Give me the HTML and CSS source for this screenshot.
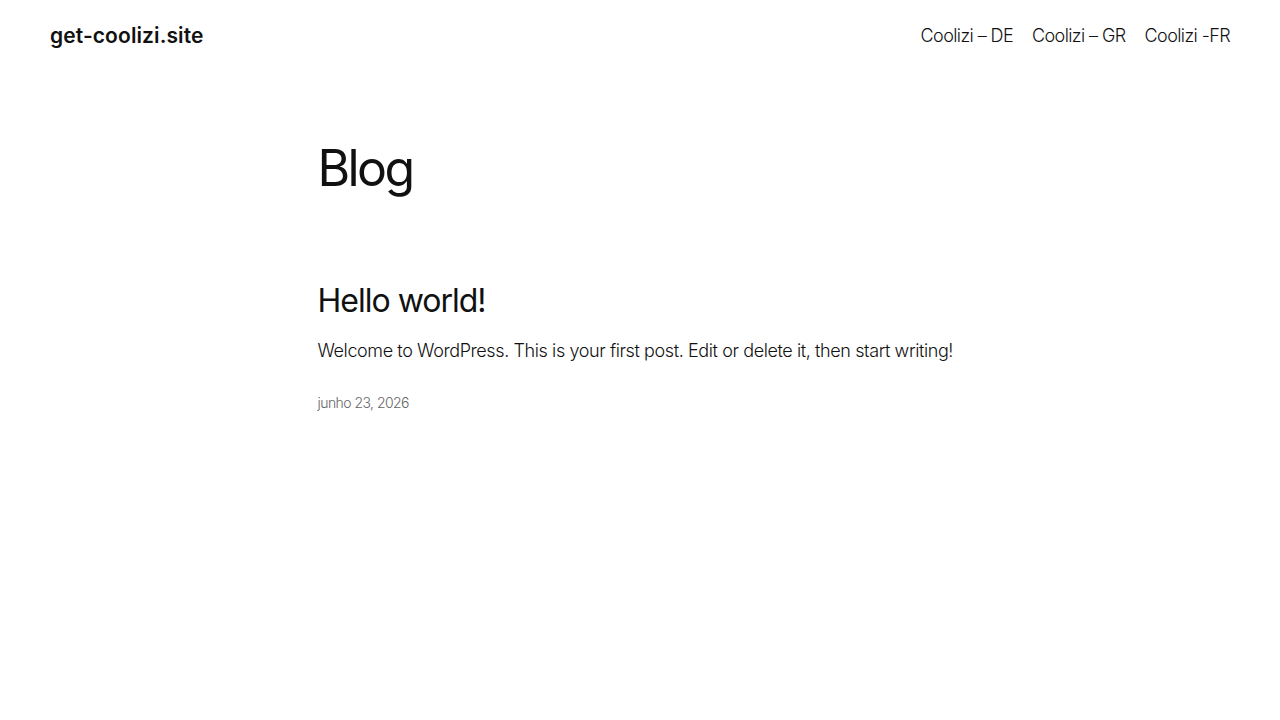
FILE: index.html
```html
<!DOCTYPE html>
<html lang="pt">
<head>
<meta charset="utf-8">
<title>Blog – get-coolizi.site</title>
<link rel="stylesheet" href="styles.css">
</head>
<body>
<header class="site-header">
  <a class="site-title" href="#">get-coolizi.site</a>
  <nav class="site-nav">
    <a href="#">Coolizi – DE</a>
    <a href="#">Coolizi – GR</a>
    <a href="#">Coolizi -FR</a>
  </nav>
</header>
<main class="content">
  <h1 class="page-title">Blog</h1>
  <article class="post">
    <h2 class="post-title"><a href="#">Hello world!</a></h2>
    <p class="post-excerpt">Welcome to WordPress. This is your first post. Edit or delete it, then start writing!</p>
    <div class="post-date">junho 23, 2026</div>
  </article>
</main>
</body>
</html>
```
FILE: styles.css
```css
* { box-sizing: border-box; }
html, body { margin: 0; padding: 0; background: #fff; }
body {
  font-family: Inter, "Open Sans", sans-serif;
  color: #111111;
  font-weight: 300;
}
a { color: inherit; text-decoration: none; }

.site-header {
  display: flex;
  justify-content: space-between;
  align-items: center;
  padding: 0 50px;
  height: 70px;
}
.site-title {
  font-size: 21px;
  font-weight: 600;
  letter-spacing: 0.1px;
}
.site-nav {
  display: flex;
  gap: 19px;
  font-size: 18px;
  font-weight: 300;
  letter-spacing: -0.6px;
}

.content {
  width: 645px;
  margin: 0 auto;
  padding-top: 68px;
}
.page-title {
  margin: 0;
  font-size: 50px;
  font-weight: 400;
  line-height: 1.2;
  letter-spacing: -2.6px;
}
.post { margin-top: 84px; }
.post-title {
  margin: 0;
  font-size: 32px;
  font-weight: 400;
  line-height: 1.2;
  letter-spacing: -1px;
}
.post-excerpt {
  margin: 18px 0 0;
  font-size: 18px;
  line-height: 1.4;
  letter-spacing: -0.4px;
}
.post-date {
  margin-top: 30px;
  font-size: 14px;
  color: #666;
  letter-spacing: -0.55px;
}
```
